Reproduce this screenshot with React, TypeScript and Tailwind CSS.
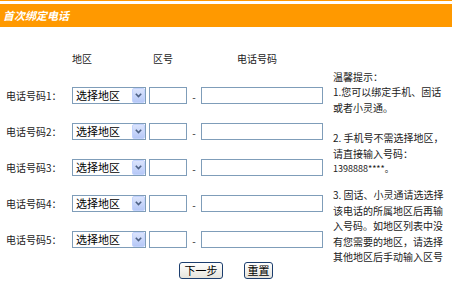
import React from 'react';

const rows = [1, 2, 3, 4, 5];

const font = { fontFamily: '"Noto Sans CJK SC", "Noto Sans", sans-serif' };

function RegionSelect() {
  return (
    <div className="relative w-[74px] h-[17px]">
      <select
        defaultValue=""
        className="block appearance-none w-full h-[17px] border border-[#7f9db9] bg-white pl-[3px] py-0 text-[11px] leading-[15px] text-black outline-none rounded-none"
      >
        <option value="">选择地区</option>
      </select>
      <div className="absolute right-[1px] top-[1px] w-[13px] h-[15px] rounded-[2px] bg-gradient-to-b from-[#dbe4fc] to-[#b6c8f7] border border-[#c3d3fd] flex items-center justify-center pointer-events-none">
        <svg width="7" height="5" viewBox="0 0 7 5">
          <path d="M0.8 0.8 L3.5 3.6 L6.2 0.8" fill="none" stroke="#4d6185" strokeWidth="1.6" />
        </svg>
      </div>
    </div>
  );
}

function XpButton({ label, width }: { label: string; width: string }) {
  return (
    <button
      className={`${width} h-[17px] rounded-[3px] border border-[#1c3e6e] bg-gradient-to-b from-white to-[#e6e4dc] text-[11px] leading-[15px] text-black flex items-center justify-center`}
    >
      {label}
    </button>
  );
}

export default function App() {
  return (
    <div className="w-[452px] h-[294px] bg-white text-[#222] overflow-hidden" style={font}>
      <div className="h-[1px] bg-[#ff9900]" />
      <div className="h-[3px] bg-white" />
      <div className="h-[23px] bg-[#ff9900] flex items-center pl-[3px]">
        <span className="text-white text-[11px] font-bold italic leading-none">首次绑定电话</span>
      </div>

      <div className="flex">
        <div className="w-[333px] pl-[6px]">
          <div className="flex mt-[25px] h-[14px] text-[10px] leading-[14px]">
            <div className="w-[66px]" />
            <div className="w-[81px]">地区</div>
            <div className="w-[84px]">区号</div>
            <div>电话号码</div>
          </div>

          <div className="flex flex-col gap-[19px] mt-[21px]">
            {rows.map((n) => (
              <div key={n} className="flex items-center h-[17px]">
                <div className="w-[66px] text-[10px] leading-[14px]">电话号码{n}：</div>
                <RegionSelect />
                <input className="block ml-[3px] w-[38px] h-[17px] border border-[#7f9db9] outline-none" />
                <div className="w-[14px] text-center text-[10px] leading-none pt-[3px]">-</div>
                <input className="block w-[122px] h-[17px] border border-[#7f9db9] outline-none" />
              </div>
            ))}
          </div>

          <div className="flex gap-[21px] mt-[14px] ml-[173px]">
            <XpButton label="下一步" width="w-[44px]" />
            <XpButton label="重置" width="w-[29px]" />
          </div>
        </div>

        <div className="pt-[42px] text-[10px] leading-[15.4px] whitespace-nowrap">
          <div>温馨提示：</div>
          <div>1.您可以绑定手机、固话</div>
          <div>或者小灵通。</div>
          <div className="mt-[15px]">2. 手机号不需选择地区，</div>
          <div>请直接输入号码：</div>
          <div className="text-[9px]">1398888****。</div>
          <div className="mt-[11px]">3. 固话、小灵通请选选择</div>
          <div>该电话的所属地区后再输</div>
          <div>入号码。如地区列表中没</div>
          <div>有您需要的地区，请选择</div>
          <div>其他地区后手动输入区号</div>
        </div>
      </div>
    </div>
  );
}
